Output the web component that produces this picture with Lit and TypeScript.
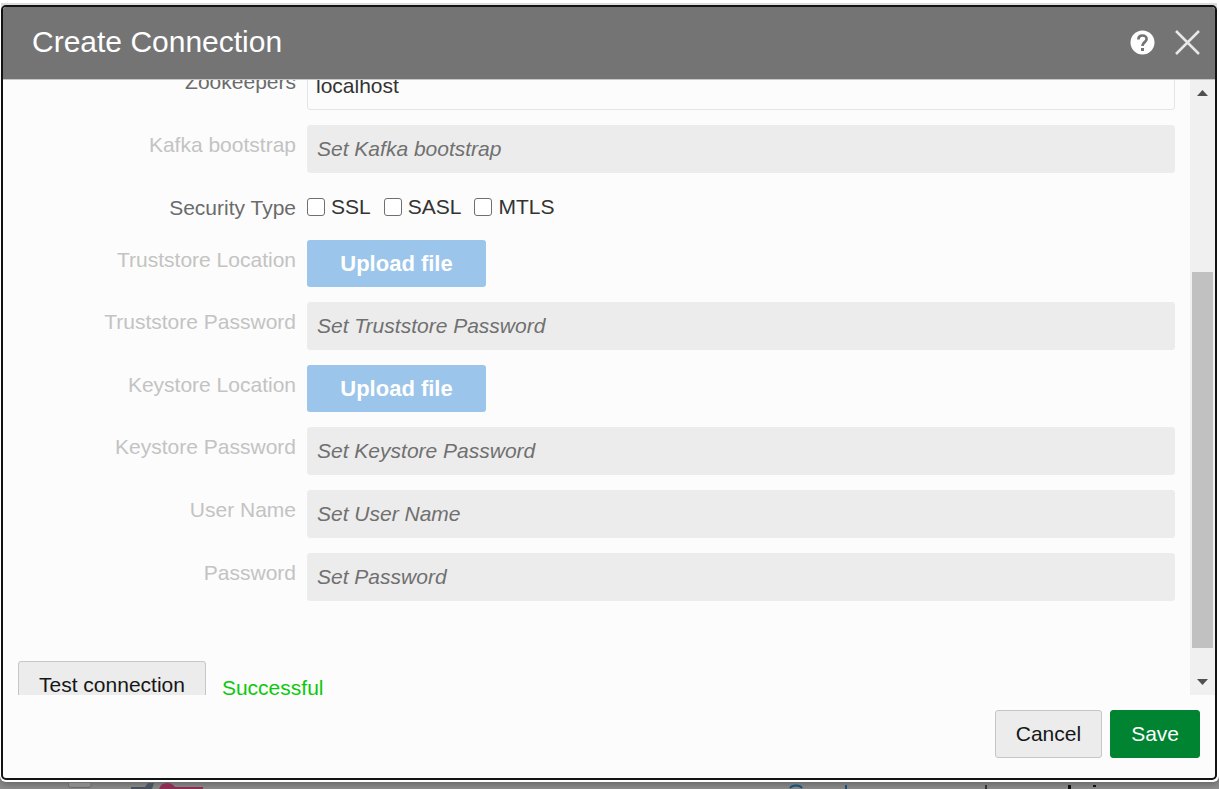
import { LitElement, html, css, nothing } from "lit";
import { customElement } from "lit/decorators.js";

interface Row {
  id: string;
  label: string;
  kind: "text" | "upload" | "checks";
  value?: string;
  placeholder?: string;
  disabled?: boolean;
}

const ROWS: Row[] = [
  { id: "zookeepers", label: "Zookeepers", kind: "text", value: "localhost" },
  { id: "bootstrap", label: "Kafka bootstrap", kind: "text", placeholder: "Set Kafka bootstrap", disabled: true },
  { id: "security", label: "Security Type", kind: "checks" },
  { id: "ts-location", label: "Truststore Location", kind: "upload", disabled: true },
  { id: "ts-password", label: "Truststore Password", kind: "text", placeholder: "Set Truststore Password", disabled: true },
  { id: "ks-location", label: "Keystore Location", kind: "upload", disabled: true },
  { id: "ks-password", label: "Keystore Password", kind: "text", placeholder: "Set Keystore Password", disabled: true },
  { id: "user", label: "User Name", kind: "text", placeholder: "Set User Name", disabled: true },
  { id: "password", label: "Password", kind: "text", placeholder: "Set Password", disabled: true },
];

@customElement("app-root")
export class AppRoot extends LitElement {
  static styles = css`
    :host {
      display: block;
      position: relative;
      box-sizing: border-box;
      height: 100vh;
      overflow: hidden;
      background: #8f8f8f;
      font-family: "Liberation Sans", Arial, sans-serif;
      font-size: 21px;
      line-height: 24px;
      color: #333;
    }
    * {
      box-sizing: border-box;
    }
    button,
    input {
      font: inherit;
      margin: 0;
    }
    .frame {
      height: calc(100vh - 7px);
      padding: 0 1px 2px;
      background: #fff;
      border-top: 3px solid #fff;
      border-radius: 0 0 6px 6px;
      box-shadow: 0 2px 8px rgba(0, 0, 0, 0.35);
    }
    .edge {
      height: 100%;
      padding-top: 2px;
      background: #dcdcdc;
      border-radius: 0 0 6px 6px;
      margin-right: 1px;
    }
    .dialog {
      display: flex;
      flex-direction: column;
      height: 100%;
      border: 2px solid #111314;
      border-radius: 5px;
      background: #fcfcfc;
      overflow: hidden;
    }
    .header {
      display: flex;
      align-items: center;
      gap: 20px;
      flex: none;
      height: 73px;
      padding: 0 15px 2px 29px;
      background: #747474;
      border-bottom: 1px solid #c8c8c8;
      color: #fff;
    }
    .title {
      flex: 1;
      margin: 0;
      font-size: 30px;
      line-height: 36px;
      font-weight: 400;
    }
    .icon {
      display: block;
      width: 25px;
      height: 25px;
      padding: 0;
      border: 0;
      background: none;
    }
    .icon svg {
      display: block;
    }
    .body {
      display: flex;
      flex: 1;
      min-height: 0;
      overflow: hidden;
    }
    .content {
      flex: 1;
      min-width: 0;
      padding: 0 15px;
    }
    .form {
      display: flex;
      flex-direction: column;
      gap: 15px;
      margin-top: -18px;
    }
    .row {
      display: grid;
      grid-template-columns: 278px 1fr;
      column-gap: 11px;
    }
    .label {
      padding-top: 8px;
      text-align: right;
      color: #6b6b6b;
    }
    .off {
      color: #c3c3c3;
    }
    .field {
      width: 100%;
      height: 48px;
      padding: 0 8px;
      border: 1px solid #e4e4e4;
      border-radius: 3px;
      background: #fcfcfc;
      color: #333;
    }
    .field:disabled {
      padding: 0 9px;
      background: #ececec;
      border-color: #ececec;
    }
    .field::placeholder {
      color: #707070;
      font-style: italic;
      opacity: 1;
    }
    .checks {
      display: flex;
      gap: 13px;
      height: 37px;
    }
    .check {
      display: flex;
      align-items: center;
      gap: 6px;
    }
    .box {
      appearance: none;
      width: 18px;
      height: 18px;
      border: 1px solid #6f6f6f;
      border-radius: 3px;
      background: #fff;
    }
    .upload {
      width: 179px;
      height: 47px;
      border: 0;
      border-radius: 3px;
      background: #9bc5ea;
      color: #fff;
      font-size: 22px;
      font-weight: 700;
    }
    .test {
      display: flex;
      align-items: center;
      gap: 16px;
      margin-top: 60px;
    }
    .btn {
      height: 48px;
      padding: 0 20px;
      border: 1px solid #c6c6c6;
      border-radius: 3px;
      background: #ececec;
      color: #161616;
    }
    .status {
      padding-top: 6px;
      color: #0dc80d;
    }
    .save {
      border-color: #008431;
      background: #008431;
      color: #fff;
    }
    .scroll {
      display: flex;
      flex-direction: column;
      align-items: center;
      flex: none;
      width: 25px;
      padding: 10px 2px;
      background: #f0f0f0;
    }
    .thumb {
      width: 100%;
      margin-bottom: 31px;
      background: #c1c1c1;
    }
    .gap {
      flex: 1;
    }
    .footer {
      display: flex;
      justify-content: flex-end;
      gap: 8px;
      flex: none;
      padding: 15px 15px 20px;
    }
    .page {
      display: block;
    }
    .peek {
      position: absolute;
      left: 0;
      right: 0;
      bottom: 0;
      height: 6px;
      overflow: hidden;
    }
  `;

  private control(r: Row) {
    if (r.kind === "checks") {
      return html`<div class="checks" role="group" aria-labelledby="security-label">
        ${["SSL", "SASL", "MTLS"].map(
          (n) => html`<label class="check"><input class="box" type="checkbox" />${n}</label>`
        )}
      </div>`;
    }
    if (r.kind === "upload") {
      return html`<button class="upload" id=${r.id} disabled>Upload file</button>`;
    }
    return html`<input
      class="field"
      id=${r.id}
      type="text"
      .value=${r.value ?? ""}
      placeholder=${r.placeholder ?? nothing}
      ?disabled=${r.disabled}
    />`;
  }

  private row(r: Row) {
    return html`<div class="row">
      ${r.kind === "checks"
        ? html`<span class="label" id="security-label">${r.label}</span>`
        : html`<label class="label ${r.disabled ? "off" : ""}" for=${r.id}>${r.label}</label>`}
      <div>${this.control(r)}</div>
    </div>`;
  }

  render() {
    return html`
      <div class="peek" aria-hidden="true">
        <svg class="page" width="1219" height="6" viewBox="0 0 1219 6">
          <path d="M68.500 0V2.500q0 2 2 2H89q2 0 2-2V0" fill="#8a8a8a" stroke="#696969" />
          <path d="M131 6V4H145L148 0H154L152 6Z" fill="#46525e" />
          <path d="M159 6Q161 0 167 0Q172 0 175 4H203V6Z" fill="#8d2d52" />
          <path d="M790 5Q792 2.500 796 2.500Q800 2.500 802 5" fill="none" stroke="#14507c" stroke-width="2" />
          <path d="M845 2h2v4h-2z" fill="#14507c" />
          <path d="M985 2h2v4h-2z" fill="#333" />
          <path d="M1068 2h3v4h-3zM1093 2h3v2h-3z" fill="#111" />
        </svg>
      </div>
      <div class="frame">
        <div class="edge">
          <section class="dialog" role="dialog" aria-labelledby="title">
            <header class="header">
              <h1 class="title" id="title">Create Connection</h1>
              <button class="icon" aria-label="Help">
                <svg width="25" height="25" viewBox="0 0 25 25">
                  <circle cx="12.500" cy="12.500" r="12" fill="#fff" />
                  <path
                    d="M8.400 9.400C8.400 6.700 10.200 5.500 12.500 5.500C14.800 5.500 16.600 6.900 16.600 9.100C16.600 12.200 12.400 12.200 12.400 16"
                    fill="none"
                    stroke="#747474"
                    stroke-width="2.700"
                  />
                  <rect x="11" y="18" width="3" height="3" fill="#747474" />
                </svg>
              </button>
              <button class="icon" aria-label="Close">
                <svg width="25" height="25" viewBox="0 0 25 25">
                  <path d="M1 1L24 24M24 1L1 24" stroke="#e8e8e8" stroke-width="2.500" fill="none" />
                </svg>
              </button>
            </header>
            <div class="body">
              <div class="content">
                <div class="form">${ROWS.map((r) => this.row(r))}</div>
                <div class="test">
                  <button class="btn">Test connection</button>
                  <output class="status">Successful</output>
                </div>
              </div>
              <div class="scroll" aria-hidden="true">
                <svg width="11" height="6" viewBox="0 0 11 6"><path d="M0 6L5.500 0L11 6Z" fill="#505050" /></svg>
                <span class="gap"></span>
                <div class="thumb" style="height:63.2%"></div>
                <svg width="11" height="6" viewBox="0 0 11 6"><path d="M0 0L5.500 6L11 0Z" fill="#505050" /></svg>
              </div>
            </div>
            <footer class="footer">
              <button class="btn">Cancel</button>
              <button class="btn save">Save</button>
            </footer>
          </section>
        </div>
      </div>
    `;
  }
}
